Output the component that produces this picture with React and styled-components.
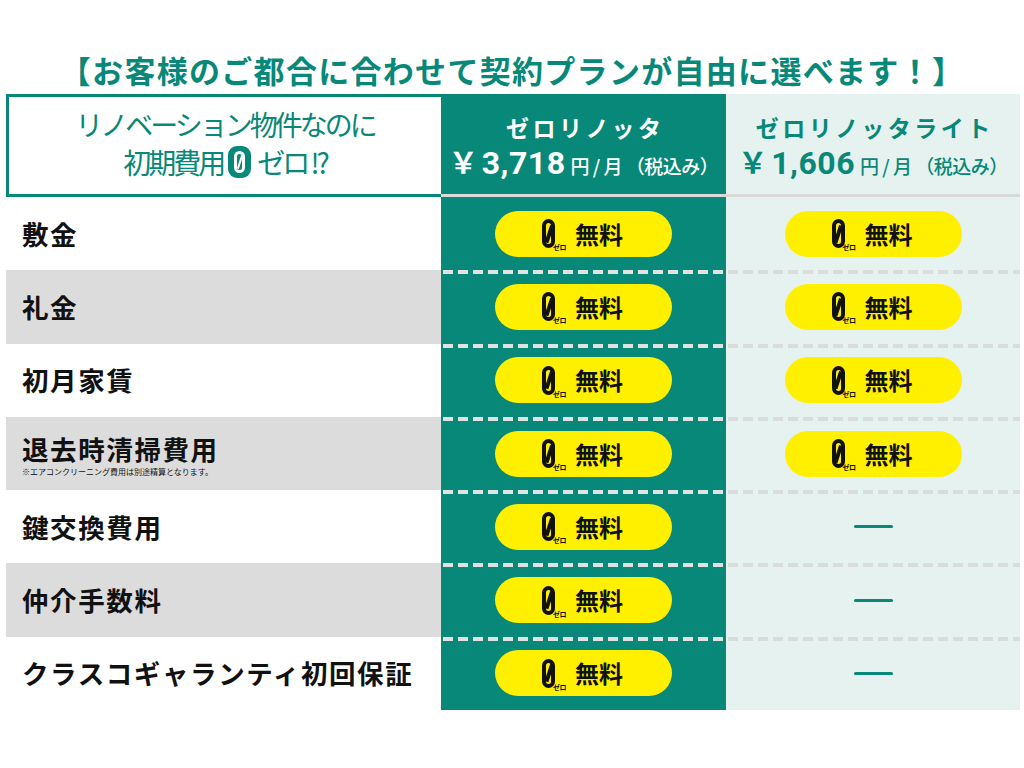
import styled, { createGlobalStyle } from "styled-components";

const TEAL = "#078878";
const LIGHT = "#e6f2ef";
const GRAY = "#dcdcdc";
const YELLOW = "#fff000";

const GlobalStyle = createGlobalStyle`
  body {
    margin: 0;
    background: #fff;
    font-family: "Noto Sans CJK JP", "Noto Sans", sans-serif;
  }
`;

const Page = styled.div`
  width: 1024px;
  height: 768px;
  overflow: hidden;
`;

const Title = styled.h1`
  margin: 0;
  height: 94px;
  box-sizing: border-box;
  padding-bottom: 6px;
  display: flex;
  align-items: flex-end;
  justify-content: center;
  font-size: 31px;
  line-height: 37px;
  font-weight: 700;
  color: ${TEAL};
  letter-spacing: 1.3px;
`;

const Table = styled.div`
  display: grid;
  grid-template-columns: 435px 285px 294px;
  grid-template-rows: 103px repeat(7, 73.3px);
  margin-left: 6px;
`;

const LeadBox = styled.div`
  border: 3px solid ${TEAL};
  border-right: none;
  display: flex;
  flex-direction: column;
  align-items: center;
  justify-content: center;
  padding-bottom: 6px;
  color: ${TEAL};
  font-size: 28px;
  line-height: 38px;
  letter-spacing: -3px;
`;

const LeadLine = styled.div`
  display: flex;
  align-items: center;
`;

const ZeroBadge = styled.span`
  display: inline-flex;
  align-items: center;
  justify-content: center;
  flex: none;
  width: 23px;
  height: 32px;
  border-radius: 9px;
  background: ${TEAL};
  margin: 0 6px 0 5px;
`;

const ZeroGlyph = styled.span`
  position: relative;
  display: inline-block;
  box-sizing: border-box;
  width: ${(p) => p.$w}px;
  height: ${(p) => p.$h}px;
  border: ${(p) => p.$stroke}px solid ${(p) => p.$color};
  border-radius: ${(p) => p.$w / 2}px;

  &::after {
    content: "";
    position: absolute;
    left: 50%;
    top: 50%;
    width: ${(p) => p.$stroke - 1}px;
    height: ${(p) => p.$h - p.$stroke * 2 - 2}px;
    background: ${(p) => p.$color};
    transform: translate(-50%, -50%) rotate(18deg);
  }
`;

const PlanHead = styled.div`
  background: ${(p) => (p.$dark ? TEAL : LIGHT)};
  color: ${(p) => (p.$dark ? "#fff" : TEAL)};
  border-bottom: 3px solid #d9d9d9;
  display: flex;
  flex-direction: column;
  align-items: center;
  justify-content: center;
  padding-top: 6px;
`;

const PlanName = styled.div`
  font-size: 23px;
  font-weight: 700;
  line-height: 32px;
  letter-spacing: 3.5px;
  margin-right: -3.5px;
`;

const Price = styled.div`
  display: flex;
  align-items: baseline;
  line-height: 36px;
  font-weight: 700;
`;

const Yen = styled.span`
  font-size: 29px;
  margin-right: 4px;
`;

const Amount = styled.span`
  font-family: Roboto, "Liberation Sans", sans-serif;
  font-size: 32px;
  letter-spacing: 0.5px;
  margin-right: 5px;
`;

const Unit = styled.span`
  font-size: 19px;
  font-weight: 500;
  letter-spacing: -0.5px;
  white-space: pre;
`;

const Label = styled.div`
  background: ${(p) => (p.$shade ? GRAY : "#fff")};
  display: flex;
  flex-direction: column;
  justify-content: center;
  padding: ${(p) => (p.$note ? "4px 0 0 16px" : "0 0 0 16px")};
  font-size: 26.5px;
  font-weight: 700;
  line-height: 30px;
  color: #111;
  letter-spacing: 1.6px;
`;

const Note = styled.div`
  font-size: 8px;
  line-height: 10px;
  font-weight: 400;
  letter-spacing: 0;
  margin-top: 3px;
`;

const Cell = styled.div`
  background-color: ${(p) => (p.$dark ? TEAL : LIGHT)};
  background-image: ${(p) =>
    p.$first
      ? "none"
      : `linear-gradient(to right, ${p.$dark ? "#e2e2e2" : "#d9dcdb"} 0 10px, transparent 10px 15px)`};
  background-size: 15px 4px;
  background-repeat: repeat-x;
  background-position: 2px 0;
  display: flex;
  align-items: center;
  justify-content: center;
`;

const Pill = styled.div`
  width: 175px;
  height: 46px;
  border-radius: 23px;
  background: ${YELLOW};
  display: flex;
  align-items: center;
  justify-content: center;
  gap: 20px;
  padding-right: 2px;
`;

const Mark = styled.span`
  position: relative;
  display: inline-flex;
`;

const MarkCaption = styled.span`
  position: absolute;
  right: -11px;
  bottom: -3px;
  font-size: 7px;
  line-height: 8px;
  font-weight: 700;
  color: #111;
  letter-spacing: -0.5px;
`;

const Free = styled.span`
  font-size: 24px;
  font-weight: 700;
  color: #111;
  line-height: 30px;
`;

const Dash = styled.span`
  display: block;
  width: 39px;
  height: 3px;
  border-radius: 2px;
  background: ${TEAL};
`;

const rows = [
  { label: "敷金", lite: true },
  { label: "礼金", lite: true },
  { label: "初月家賃", lite: true },
  { label: "退去時清掃費用", lite: true, note: "※エアコンクリーニング費用は別途精算となります。" },
  { label: "鍵交換費用", lite: false },
  { label: "仲介手数料", lite: false },
  { label: "クラスコギャランティ初回保証", lite: false },
];

function FreeBadge() {
  return (
    <Pill>
      <Mark>
        <ZeroGlyph $w={13} $h={29} $stroke={4.5} $color="#111" />
        <MarkCaption>ゼロ</MarkCaption>
      </Mark>
      <Free>無料</Free>
    </Pill>
  );
}

function Plan({ dark, name, amount }) {
  return (
    <PlanHead $dark={dark}>
      <PlanName>{name}</PlanName>
      <Price>
        <Yen>￥</Yen>
        <Amount>{amount}</Amount>
        <Unit>円 / 月 （税込み）</Unit>
      </Price>
    </PlanHead>
  );
}

function Row({ row, index }) {
  const first = index === 0;
  return (
    <>
      <Label $shade={index % 2 === 1} $note={!!row.note}>
        {row.label}
        {row.note && <Note>{row.note}</Note>}
      </Label>
      <Cell $dark $first={first}>
        <FreeBadge />
      </Cell>
      <Cell $first={first}>{row.lite ? <FreeBadge /> : <Dash />}</Cell>
    </>
  );
}

export default function App() {
  return (
    <Page>
      <GlobalStyle />
      <Title>【お客様のご都合に合わせて契約プランが自由に選べます！】</Title>
      <Table>
        <LeadBox>
          <LeadLine>リノベーション物件なのに</LeadLine>
          <LeadLine>
            初期費用
            <ZeroBadge>
              <ZeroGlyph $w={11} $h={22} $stroke={3} $color="#fff" />
            </ZeroBadge>
            ゼロ !?
          </LeadLine>
        </LeadBox>
        <Plan dark name="ゼロリノッタ" amount="3,718" />
        <Plan name="ゼロリノッタライト" amount="1,606" />

        {rows.map((row, i) => (
          <Row key={row.label} row={row} index={i} />
        ))}
      </Table>
    </Page>
  );
}
